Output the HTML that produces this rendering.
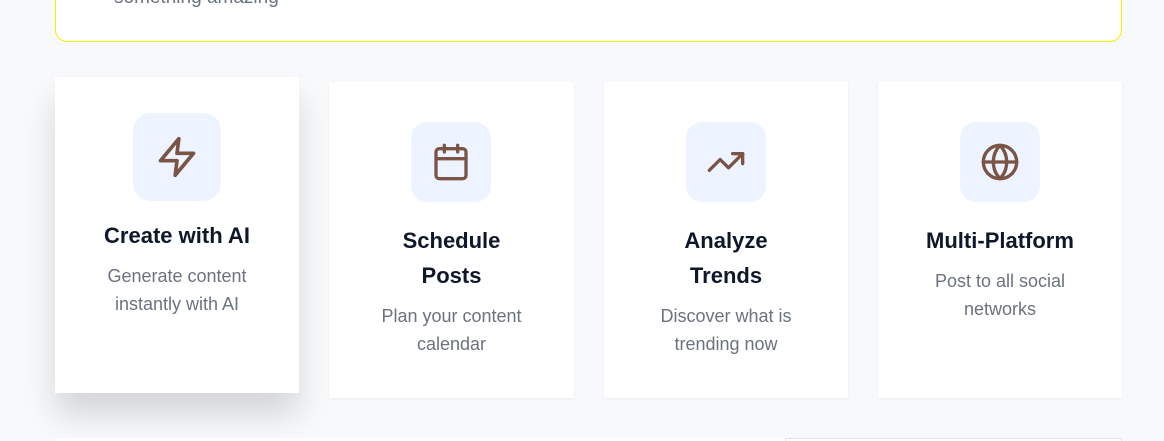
<!DOCTYPE html>
<html><head><style>
*{margin:0;padding:0;box-sizing:border-box}
html,body{width:1164px;height:441px;overflow:hidden}
body{background:#f8f9fb;font-family:"Liberation Sans",sans-serif;position:relative}
.top{position:absolute;left:55px;top:-40px;width:1067px;height:82px;background:#fff;border:1px solid #f7ee00;border-top:none;border-radius:0 0 12px 12px}
.top span{position:absolute;left:58px;top:27px;font-size:19px;color:#6b7280}
.card{position:absolute;top:82px;width:245px;height:316px;background:#fff;box-shadow:0 1px 2px rgba(0,0,0,.06);text-align:center}
.ic{position:absolute;left:82px;top:40px;width:80px;height:80px;border-radius:16px;background:#eef4ff;display:flex;align-items:center;justify-content:center}
.ic svg{width:40px;height:40px;fill:none;stroke:#7a5546;stroke-width:2;stroke-linecap:round;stroke-linejoin:round}
h3{position:absolute;left:0;right:0;top:141px;font-size:22px;font-weight:bold;color:#0f172a;line-height:35px}
p{position:absolute;left:0;right:0;font-size:18px;color:#6b7280;line-height:28px}
.c1{left:55px;top:77px;width:244px;box-shadow:0 22px 30px rgba(0,0,0,.14)}
.c1 .ic{transform:scale(1.1)}
.bot{position:absolute;left:55px;top:438px;width:1067px;height:10px;background:#fff}
.bot2{position:absolute;left:785px;top:438px;width:337px;height:10px;border:1px solid #e2e0ea;background:#fff}
</style></head><body>
<div class="top"><span>something amazing</span></div>
<div class="card c1"><div class="ic"><svg viewBox="0 0 24 24"><path d="M13 2 3 14h9l-1 8 10-12h-9l1-8z"/></svg></div><h3>Create with AI</h3><p style="top:185px">Generate content<br>instantly with AI</p></div>
<div class="card" style="left:329px"><div class="ic"><svg viewBox="0 0 24 24"><rect x="3" y="4" width="18" height="18" rx="2"/><path d="M16 2v4M8 2v4M3 10h18"/></svg></div><h3>Schedule<br>Posts</h3><p style="top:220px">Plan your content<br>calendar</p></div>
<div class="card" style="left:604px;width:244px"><div class="ic"><svg viewBox="0 0 24 24"><path d="M22 7l-8.5 8.5-5-5L2 17"/><path d="M16 7h6v6"/></svg></div><h3>Analyze<br>Trends</h3><p style="top:220px">Discover what is<br>trending now</p></div>
<div class="card" style="left:878px;width:244px"><div class="ic"><svg viewBox="0 0 24 24"><circle cx="12" cy="12" r="10"/><path d="M12 2a14.5 14.5 0 0 0 0 20 14.5 14.5 0 0 0 0-20M2 12h20"/></svg></div><h3>Multi-Platform</h3><p style="top:185px">Post to all social<br>networks</p></div>
<div class="bot"></div><div class="bot2"></div>
</body></html>
